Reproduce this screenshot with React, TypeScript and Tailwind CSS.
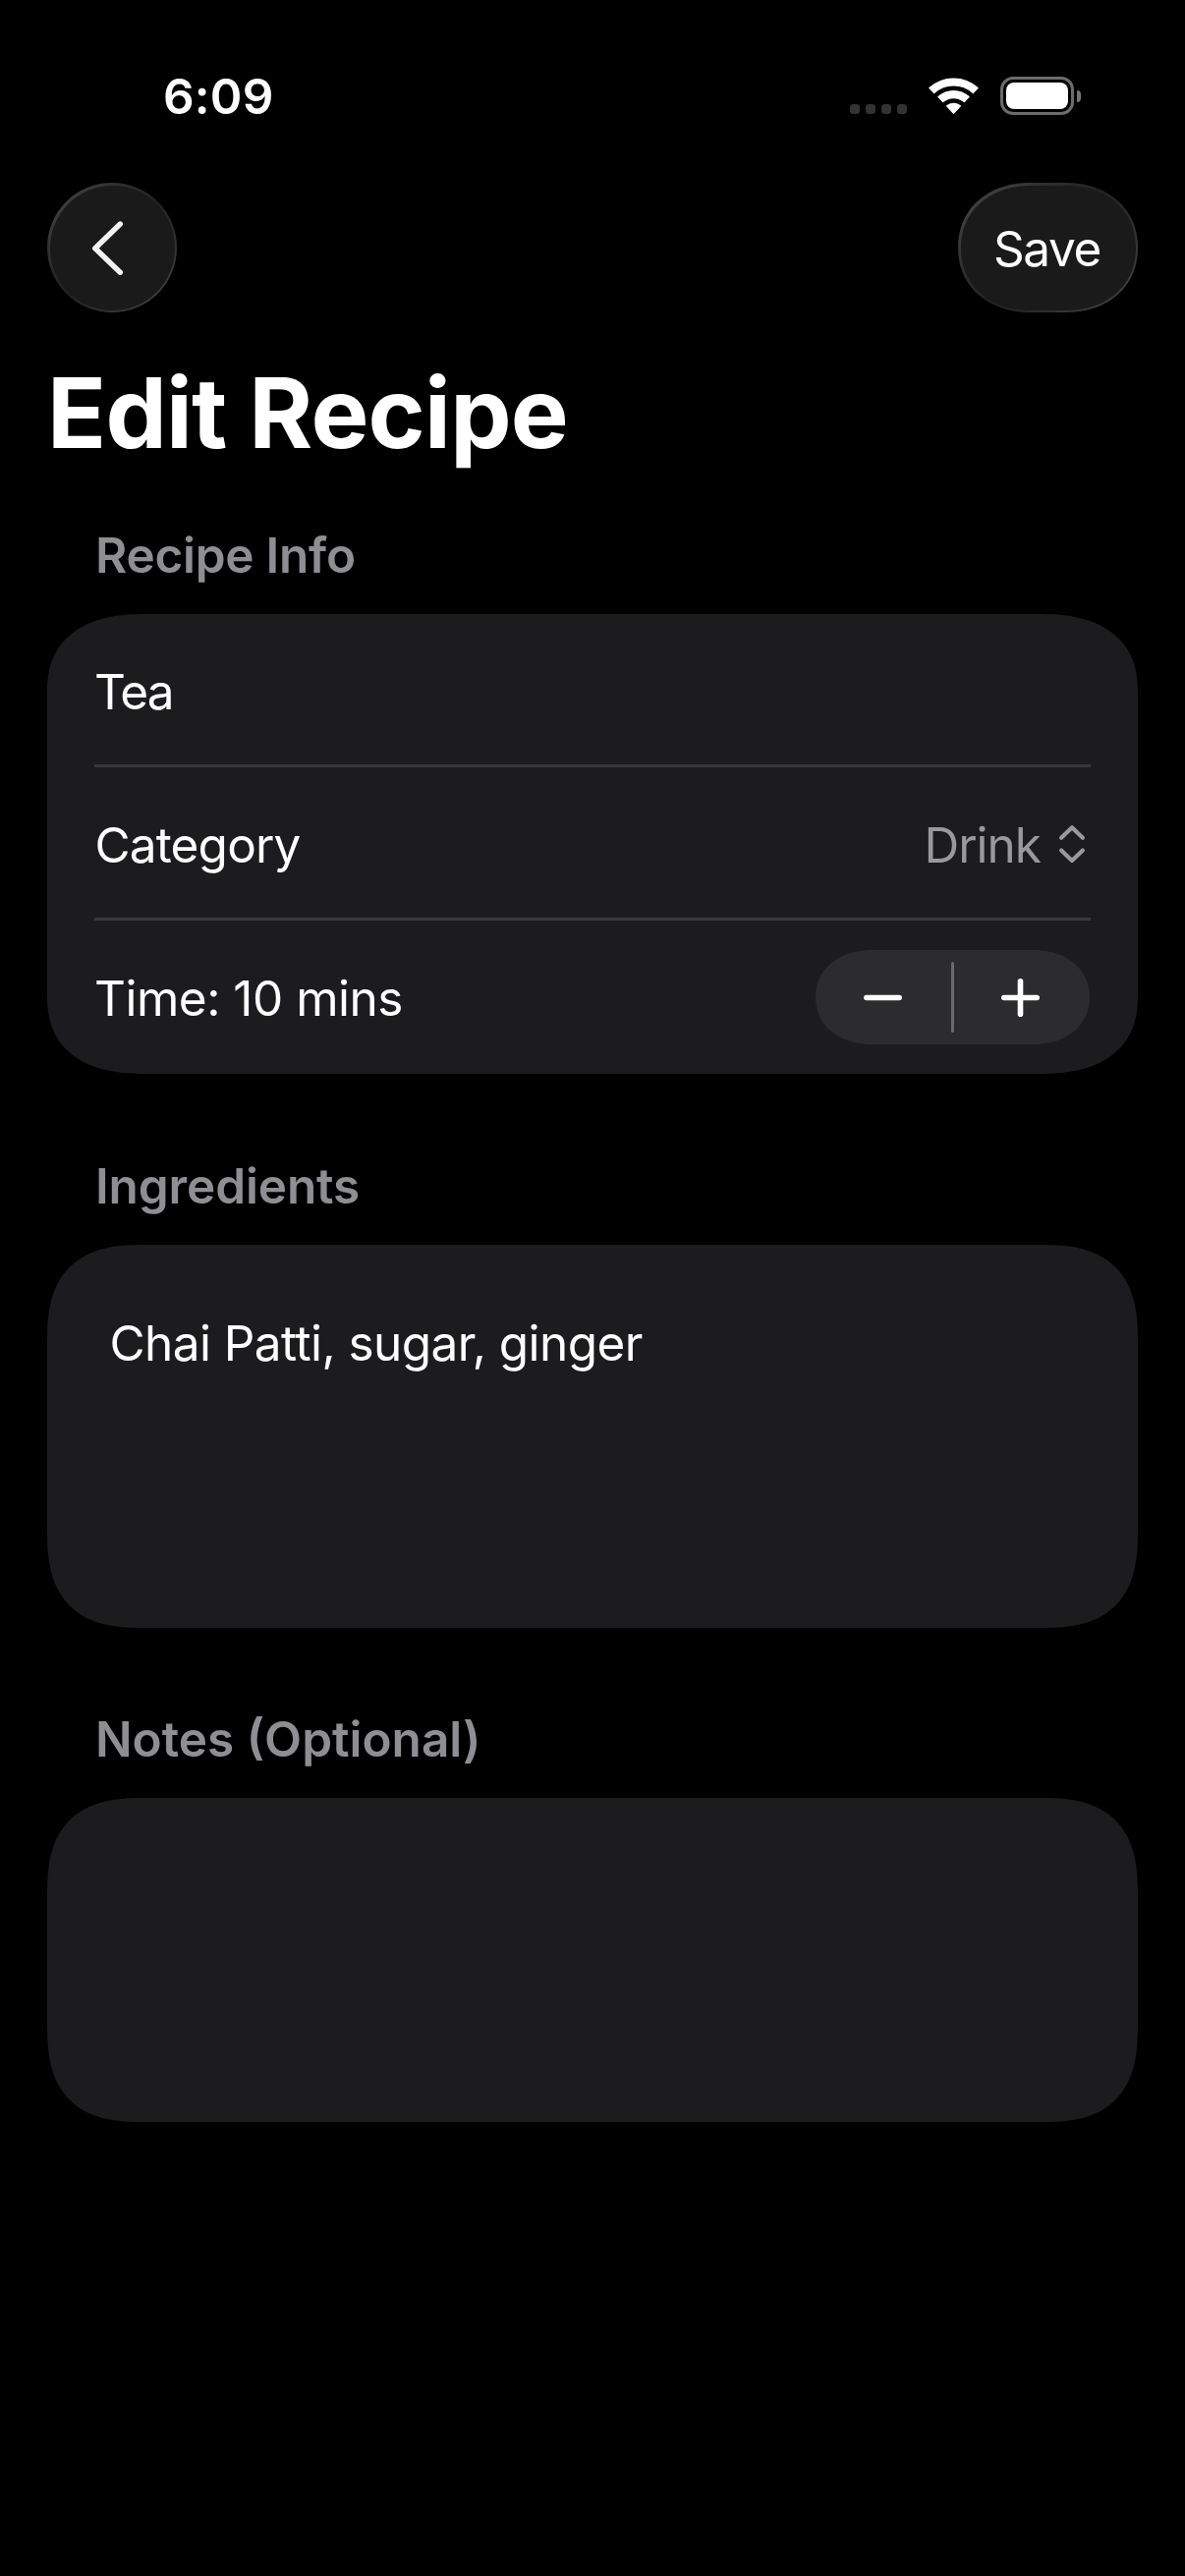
import React from "react";

function StatusBar() {
  return (
    <header className="flex h-[186px] items-start justify-between pl-[166px] pr-[106px] pt-[68px]">
      <span className="text-[49.5px] font-semibold leading-[60px] tracking-[0.2px]">6:09</span>
      <div className="flex items-start pt-[10px]">
        <div className="flex gap-[6px] pt-[28px]">
          {[0, 1, 2, 3].map((i) => (
            <span key={i} className="size-[10px] rounded-[3.5px] bg-[#333333]" />
          ))}
        </div>
        <svg className="ml-[22px] mt-px h-[38px] w-[51px]" viewBox="0 0 51 38" fill="#fff" stroke="#fff" strokeWidth="1.4" strokeLinejoin="round">
          <path d="M1 10.6A36.3 36.3 0 0 1 50 10.6L45.3 15.4A29.5 29.5 0 0 0 5.7 15.4Z" />
          <path d="M10 19.6A23.4 23.4 0 0 1 41 19.6L36.3 24.4A16.7 16.7 0 0 0 14.7 24.4Z" />
          <path d="M18.7 28.8A10.6 10.6 0 0 1 32.3 28.8L25.5 36.2Z" />
        </svg>
        <div className="ml-[22px] flex items-center">
          <div className="flex h-[39px] w-[75px] rounded-[13px] border-[3px] border-[#6b6b6b] p-[3px]">
            <div className="flex-1 rounded-[8px] bg-white" />
          </div>
          <div className="ml-[3px] h-[12px] w-[4px] rounded-r-full bg-[#757575]" />
        </div>
      </div>
    </header>
  );
}

function SectionTitle({ children, className }: { children: string; className: string }) {
  return <h2 className={`pl-[49px] text-[49.5px] font-semibold leading-[60px] text-[#8e8e93] ${className}`}>{children}</h2>;
}

function Stepper() {
  return (
    <div className="mr-px mt-[30px] flex h-[96px] w-[279px] items-center justify-between rounded-[58px_/_48px] bg-[#2c2c2e] pl-[49px] pr-[51px] [corner-shape:superellipse(1.1)]">
      <svg className="h-[39px] w-[39px]" viewBox="0 0 39 39" stroke="#fff" strokeWidth="5.6" strokeLinecap="round">
        <path d="M2.8 19.5H36.2" />
      </svg>
      <span className="ml-[2px] h-[72px] w-[3px] rounded-full bg-[#6a6a6d]" />
      <svg className="h-[39px] w-[39px]" viewBox="0 0 39 39" stroke="#fff" strokeWidth="5.6" strokeLinecap="round">
        <path d="M2.8 19.5H36.2M19.5 2.8V36.2" />
      </svg>
    </div>
  );
}

export default function App() {
  return (
    <div className="h-[2622px] w-[1206px] overflow-hidden bg-black font-['Inter',sans-serif] text-[49.5px] text-white">
      <StatusBar />
      <main className="px-[48px]">
        <nav className="flex h-[132px] justify-between">
          <button className="size-[132px] rounded-full bg-[linear-gradient(135deg,#424242_8%,#2c2c2c_32%,#212121_50%,#2c2c2c_68%,#424242_92%)] p-[2.5px]">
            <span className="flex size-full items-center rounded-full bg-[#1a1a1a] pl-[43.5px]">
              <svg className="h-[56px] w-[32px]" viewBox="0 0 32 56" fill="none" stroke="#f3f2f5" strokeWidth="5.4" strokeLinecap="round" strokeLinejoin="round">
                <path d="M28.3 4L2.8 28.7L28.3 53.3" />
              </svg>
            </span>
          </button>
          <button className="h-[132px] w-[183px] rounded-[74px_/_66px] bg-[linear-gradient(135deg,#424242_8%,#2c2c2c_32%,#212121_50%,#2c2c2c_68%,#424242_92%)] p-[2.5px] [corner-shape:superellipse(1.1)]">
            <span className="flex size-full justify-center rounded-[71.5px_/_63.5px] bg-[#1a1a1a] pr-[2px] text-[49.5px] leading-[128px] tracking-[-1.4px] [corner-shape:superellipse(1.1)]">
              Save
            </span>
          </button>
        </nav>

        <h1 className="mt-[42px] text-[99px] font-bold leading-[120px] tracking-[-0.75px]">Edit Recipe</h1>

        <SectionTitle className="mt-[55px] tracking-[-0.25px]">Recipe Info</SectionTitle>
        <section className="mt-[30px] h-[468px] rounded-[100px_/_80px] bg-[#1c1c1e] px-[48px] [corner-shape:superellipse(1.27)]">
          <div className="h-[156px] border-b-[3px] border-[#38383a] leading-[158px] tracking-[-1.8px]">Tea</div>
          <div className="flex h-[156px] justify-between border-b-[3px] border-[#38383a] leading-[158px]">
            <span className="pl-[0.5px] tracking-[-0.85px]">Category</span>
            <span className="flex text-[#98989f]">
              <span className="tracking-[-1px]">Drink</span>
              <svg className="ml-[18px] mr-[5px] mt-[58px] h-[40px] w-[28px]" viewBox="0 0 28 40" fill="none" stroke="#98989f" strokeWidth="4.2" strokeLinecap="round" strokeLinejoin="round">
                <path d="M3.1 13.7L14 3.3L24.9 13.7M3.1 26.6L14 37L24.9 26.6" />
              </svg>
            </span>
          </div>
          <div className="flex h-[156px] justify-between leading-[158px]">
            <span className="tracking-[-0.5px]">Time: 10 mins</span>
            <Stepper />
          </div>
        </section>

        <SectionTitle className="mt-[84px] tracking-[-0.12px]">Ingredients</SectionTitle>
        <section className="mt-[30px] h-[390px] rounded-[100px] bg-[#1c1c1e] pl-[63.5px] pt-[70px] [corner-shape:superellipse(1.42)]">
          <p className="leading-[60px] tracking-[-0.57px]">Chai Patti, sugar, ginger</p>
        </section>

        <SectionTitle className="mt-[83px]">Notes (Optional)</SectionTitle>
        <section className="mt-[30px] h-[330px] rounded-[100px] bg-[#1c1c1e] [corner-shape:superellipse(1.42)]" />
      </main>
    </div>
  );
}
